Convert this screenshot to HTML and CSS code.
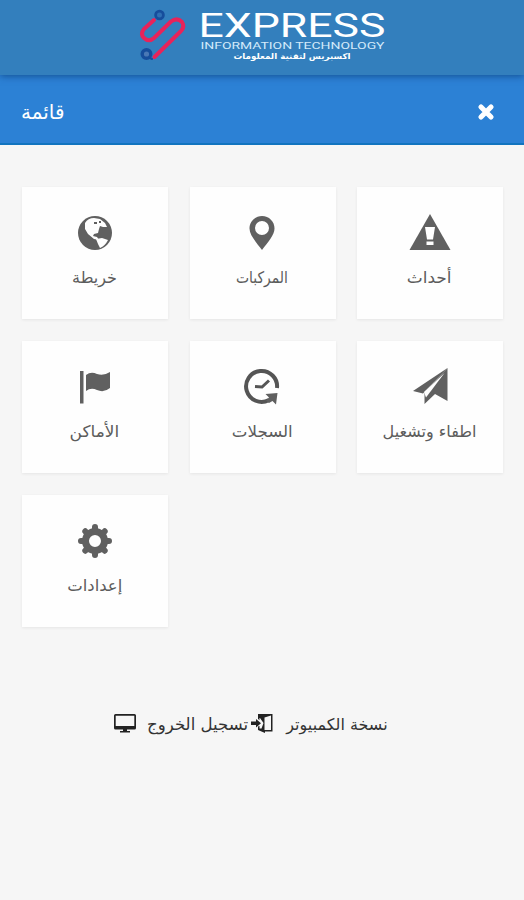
FILE: index.html
```html
<!DOCTYPE html>
<html lang="ar">
<head>
    <meta charset="UTF-8">
    <meta name="viewport" content="width=device-width, initial-scale=1.0">
    <title>قائمة</title>
    <link rel="stylesheet" href="styles.css">
</head>
<body>
    <header class="brand">
        <svg class="brand-logo" width="250" height="66" viewBox="138 0 250 66">
            <g fill="none" stroke-linecap="round" stroke-linejoin="round">
                <path d="M154 20 L144 29 Q140 34 144 38 Q149 42.500 154 38 L171 21.500 Q177 17 182 22 Q185 26.500 181 31 L154.500 57" stroke="#e8235a" stroke-width="4"/>
                <circle cx="159.500" cy="15" r="3.900" fill="#2f6fb4" stroke="#164e9c" stroke-width="2.800"/>
                <circle cx="146.500" cy="54" r="4.300" fill="#4a78b5" stroke="#164e9c" stroke-width="3.400"/>
                <path d="M150 58 L152 59" stroke="#164e9c" stroke-width="2"/>
            </g>
            <text class="logo-name" x="198.500" y="36.500" textLength="187" lengthAdjust="spacingAndGlyphs">EXPRESS</text>
            <text class="logo-sub" x="200.500" y="49" textLength="184" lengthAdjust="spacingAndGlyphs">INFORMATION TECHNOLOGY</text>
            <text class="logo-arabic" x="292" y="59" textLength="117" lengthAdjust="spacingAndGlyphs">اكسبريس لتقنية المعلومات</text>
        </svg>
    </header>

    <div class="menu-bar">
        <h1 class="menu-title">قائمة</h1>
        <svg class="close" width="18" height="18" viewBox="0 0 18 18">
            <path d="M4 4 L14 14 M14 4 L4 14"/>
        </svg>
    </div>

    <main class="menu-grid">
        <a class="card">
            <svg class="icon" width="42" height="42" viewBox="0 0 42 42">
                <circle cx="21" cy="21" r="17"/>
                <path class="cut" d="M11 11 Q14 6 20 6 L26 7 L31 11 L33 15 L29 15 L26 14 L25 17 L24 21 L20 22 L19 24 L23 25 L25 28 L20 27 L14 22 L11 17 Z"/>
                <path class="cut" d="M22 27 L28 26 L34 28 Q31 34 26 36 L24 32 Z"/>
                <path d="M20 10 h3 v2 h-3z M25 9 h2 v2 h-2z"/>
            </svg>
            <span class="label label-map">خريطة</span>
        </a>
        <a class="card">
            <svg class="icon" width="42" height="42" viewBox="0 0 42 42">
                <path fill-rule="evenodd" d="M21 4 C28 4 33.500 9.500 33.500 16.500 C33.500 23 27 30 21 38 C15 30 8.500 23 8.500 16.500 C8.500 9.500 14 4 21 4 Z M21 9 A7 7 0 1 0 21 23 A7 7 0 1 0 21 9 Z"/>
            </svg>
            <span class="label label-vehicles">المركبات</span>
        </a>
        <a class="card">
            <svg class="icon" width="42" height="42" viewBox="0 0 42 42">
                <path d="M21 2 L41.500 38 H0.500 Z"/>
                <path class="cut" d="M16 15 H26 L24 27.500 H18 Z M17.500 29.500 H24.500 V33 H17.500 Z"/>
            </svg>
            <span class="label label-events">أحداث</span>
        </a>
        <a class="card">
            <svg class="icon" width="42" height="42" viewBox="0 0 42 42">
                <path d="M6 5 h3.500 v32.500 h-3.500z M12 9 Q17 5 23 8 Q30 10 36 6 V22 Q30 27 23 24 Q17 21 12 25 Z"/>
            </svg>
            <span class="label label-places">الأماكن</span>
        </a>
        <a class="card">
            <svg class="icon" width="42" height="42" viewBox="0 0 42 42">
                <path class="line" d="M36 22 A15.500 15.500 0 1 0 28 34"/>
                <path d="M24.500 28 L36.500 27 L35 38.500 L31.500 35 L28 37 L25 34.500 L28 31.500 Z"/>
                <path class="hand" d="M14 20.500 L21 21 L28 14.500"/>
            </svg>
            <span class="label label-logs">السجلات</span>
        </a>
        <a class="card">
            <svg class="icon" width="42" height="42" viewBox="0 0 42 42">
                <path d="M38.500 2 L4 25 L14 27.500 Z"/>
                <path d="M38.500 2 V35 L26 28 L15.500 38 V26 Z"/>
                <path class="cut" d="M35.500 7 L15 26 L17 31.500 Z"/>
            </svg>
            <span class="label label-power">اطفاء وتشغيل</span>
        </a>
        <a class="card">
            <svg class="icon" width="42" height="42" viewBox="0 0 42 42">
                <circle class="gear" cx="21" cy="21" r="9.500"/>
                <path class="teeth" d="M21 7 V11 M21 31 V35 M7 21 H11 M31 21 H35 M11.300 11.300 L14 14 M28 28 L30.700 30.700 M30.700 11.300 L28 14 M14 28 L11.300 30.700"/>
            </svg>
            <span class="label label-settings">إعدادات</span>
        </a>
    </main>

    <footer class="links">
        <svg width="22" height="20" viewBox="0 0 22 20">
            <path fill-rule="evenodd" d="M1.500 0 H20.500 Q22 0 22 1.500 V14 Q22 15.500 20.500 15.500 H1.500 Q0 15.500 0 14 V1.500 Q0 0 1.500 0 Z M1.700 1.700 V12 H20.300 V1.700 Z"/>
            <path d="M9 15 h4 v2 h3 v1.500 H6 V17 h3z"/>
        </svg>
        <a class="link-logout">تسجيل الخروج</a>
        <svg class="exit" width="22" height="20" viewBox="0 0 22 20">
            <path d="M0 7.500 H5 V5 L10 9.300 L5 13.500 V11 H0 Z"/>
            <path d="M7 0 H21.500 V17.500 H14 V19 L7 16 V12.500 L8.500 12 V14.500 H10.500 L12.500 9 L9 4 H8.500 V6 L7 5 Z"/>
            <path class="exit-door" d="M13.500 3.500 L20 1.500 V16 H13.500 Z"/>
        </svg>
        <a class="link-desktop">نسخة الكمبيوتر</a>
    </footer>
</body>
</html>
```
FILE: styles.css
```css
body {
    margin: 0;
    min-height: 900px;
    background-color: #f6f6f6;
    font-family: 'DejaVu Sans', sans-serif;
}
.brand {
    position: relative;
    height: 75px;
    box-sizing: border-box;
    padding-left: 138px;
    background-color: #337fbd;
    box-shadow: 0 1px 7px rgba(0, 45, 100, 0.6);
}
.brand-logo {
    display: block;
    overflow: visible;
}
.brand-logo text {
    fill: #fff;
}
.logo-name {
    font: 33px Roboto, sans-serif;
}
.brand-logo .logo-sub {
    font: 9px Roboto, sans-serif;
    fill: #d3eafa;
}
.logo-arabic {
    font: bold 8px 'DejaVu Sans', sans-serif;
    text-anchor: middle;
}
.menu-bar {
    display: flex;
    justify-content: space-between;
    align-items: center;
    height: 70px;
    box-sizing: border-box;
    padding: 5px 29px 0 21px;
    background-color: #2c81d5;
    border-bottom: 2px solid #1274bf;
}
.menu-title {
    margin: 0;
    font-size: 20px;
    font-weight: normal;
    color: #fff;
}
.close {
    fill: none;
    stroke: #fff;
    stroke-width: 5.2;
    stroke-linecap: round;
}
.menu-grid {
    display: grid;
    direction: ltr;
    grid-template-columns: repeat(3, 146px);
    grid-auto-rows: 132px;
    gap: 22px 21.5px;
    padding: 42px 21px 0 22px;
}
.card {
    display: flex;
    flex-direction: column;
    align-items: center;
    box-sizing: border-box;
    padding: 25px 1px 0 0;
    background-color: #fefefe;
    box-shadow: 0 1px 3px rgba(0, 0, 0, 0.07);
}
.icon {
    fill: #606060;
}
.icon .cut {
    fill: #fefefe;
}
.icon .line {
    fill: none;
    stroke: #555;
    stroke-width: 4;
}
.icon .hand {
    fill: none;
    stroke: #555;
    stroke-width: 3;
}
.icon .gear {
    fill: none;
    stroke: #606060;
    stroke-width: 7;
}
.icon .teeth {
    fill: none;
    stroke: #606060;
    stroke-width: 6;
    stroke-linecap: round;
}
.label {
    margin-top: 12px;
    font-size: 16px;
    line-height: 24px;
    color: #5c5c5c;
    white-space: nowrap;
}
.label-vehicles {
    transform: scaleX(0.87);
}
.label-events {
    transform: scaleX(1.06);
}
.label-places {
    transform: scaleX(1.06);
}
.label-logs {
    transform: scaleX(1.04);
}
.label-settings {
    transform: scaleX(1.03);
}
.links {
    display: flex;
    align-items: center;
    height: 30px;
    padding: 82px 0 0 114px;
    font-size: 16.6px;
    color: #333;
    white-space: nowrap;
}
.links svg {
    flex: none;
    fill: #222;
}
.link-logout {
    margin-left: 11px;
}
.exit {
    margin-left: 3px;
}
.exit .exit-door {
    fill: #f6f6f6;
}
.link-desktop {
    margin-left: 13px;
    font-size: 16px;
}
```
